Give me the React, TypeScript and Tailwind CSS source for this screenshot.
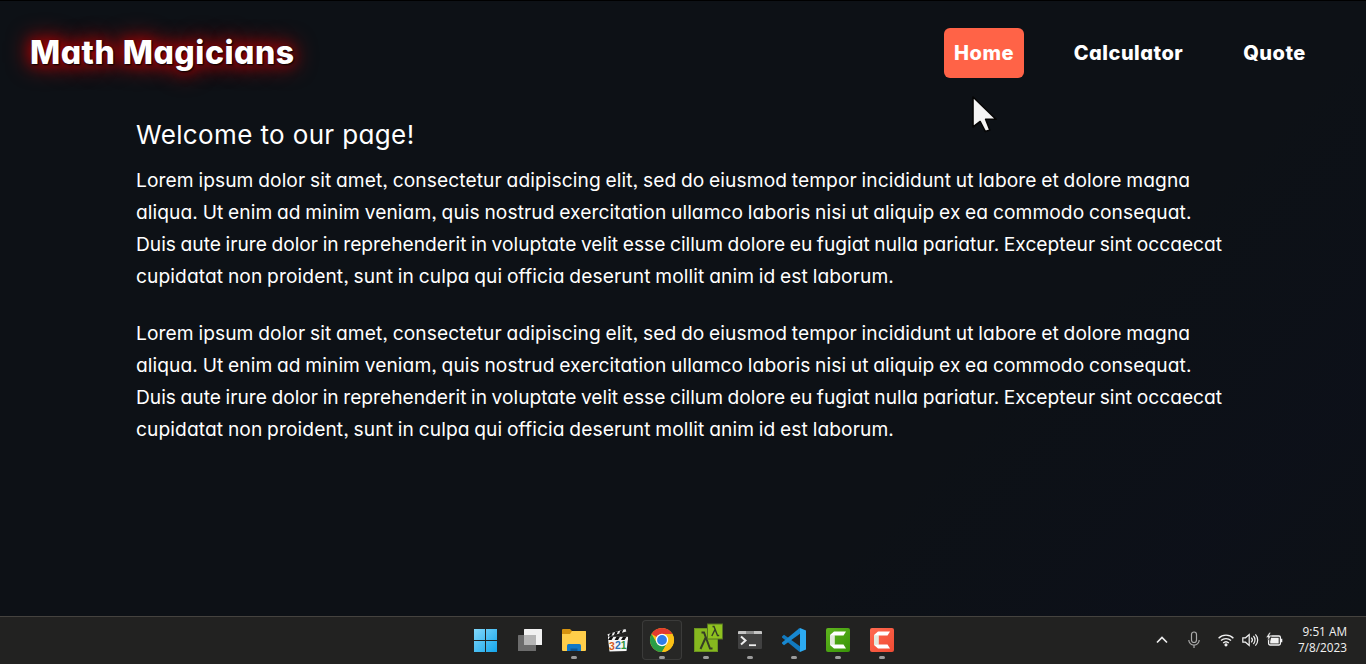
import type { ReactNode } from "react";

type Line = { text: string; tracking: string };

const lines: Line[] = [
  { text: "Lorem ipsum dolor sit amet, consectetur adipiscing elit, sed do eiusmod tempor incididunt ut labore et dolore magna", tracking: "tracking-[0.09px]" },
  { text: "aliqua. Ut enim ad minim veniam, quis nostrud exercitation ullamco laboris nisi ut aliquip ex ea commodo consequat.", tracking: "tracking-[0.08px]" },
  { text: "Duis aute irure dolor in reprehenderit in voluptate velit esse cillum dolore eu fugiat nulla pariatur. Excepteur sint occaecat", tracking: "tracking-[0px]" },
  { text: "cupidatat non proident, sunt in culpa qui officia deserunt mollit anim id est laborum.", tracking: "tracking-[0.1px]" },
];

function Paragraph() {
  return (
    <p className="text-[19.2px] leading-8 [word-spacing:-0.8px]">
      {lines.map((line) => (
        <span key={line.text} className={`block whitespace-nowrap ${line.tracking}`}>
          {line.text}
        </span>
      ))}
    </p>
  );
}

function TaskButton({ children, active, running }: { children: ReactNode; active?: boolean; running?: boolean }) {
  return (
    <div className={`relative h-10 w-10 rounded ${active ? "bg-[#272726] ring-1 ring-inset ring-[#3b3b3a]" : ""}`}>
      <svg viewBox="0 0 40 40" className="block h-10 w-10">
        {children}
      </svg>
      {running && <span className="absolute bottom-[1px] left-[17px] h-[3px] w-[6px] rounded-full bg-[#9b9b9b]" />}
    </div>
  );
}

function CamtasiaGlyph({ id, from, to }: { id: string; from: string; to: string }) {
  return (
    <>
      <defs>
        <linearGradient id={id} x1="0" y1="0" x2="1" y2="1">
          <stop offset="0" stopColor={from} />
          <stop offset="1" stopColor={to} />
        </linearGradient>
      </defs>
      <rect x="8" y="8" width="24" height="24" rx="2" fill={`url(#${id})`} />
      <path d="M12 15L16 11.5H28L25.5 15.5H16.5V24.5H25.5L28 28.5H16L12 25Z" fill="#fff" />
      <path d="M12 15L16.5 15.5V24.5L12 25Z" fill="#e3e9dc" />
    </>
  );
}

function Taskbar() {
  return (
    <footer className="grid h-12 grid-cols-[466px_436px_1fr] border-t border-[#45433f] bg-[#222221] pt-[3px]">
      <div />
      <div className="flex gap-1">
        <TaskButton>
          <defs>
            <linearGradient id="win" x1="0" y1="0" x2="1" y2="1">
              <stop offset="0" stopColor="#82d8fb" />
              <stop offset="1" stopColor="#14a5ea" />
            </linearGradient>
          </defs>
          <path d="M8 9H19V20H8ZM20 9H31V20H20ZM8 21H19V32H8ZM20 21H31V32H20Z" fill="url(#win)" />
        </TaskButton>
        <TaskButton>
          <rect x="14" y="9" width="18" height="16" rx="0.5" fill="#f1f1f1" />
          <rect x="8" y="15" width="18" height="16" rx="0.5" fill="#6c6c6c" />
          <rect x="14" y="15" width="12" height="10" fill="#b5b5b5" />
        </TaskButton>
        <TaskButton running>
          <path d="M8 10Q8 9 9 9H16L18 11H32V18H8Z" fill="#d6930f" />
          <path d="M8 14H16L18 11H31Q32 11 32 12V30Q32 31 31 31H9Q8 31 8 30Z" fill="#ffce4a" />
          <path d="M13 31V25.5Q13 24 14.5 24H25.5Q27 24 27 25.5V31Z" fill="#0f78c8" />
          <path d="M16.5 31V28.5H23.5V31Z" fill="#0b5797" />
        </TaskButton>
        <TaskButton>
          <path d="M10 18.5H30L28.5 31L11.5 31.5Z" fill="#f5f5f5" />
          <path d="M9.5 14.2L27.5 9L28.3 11.6L10.3 16.8Z" fill="#eee" />
          <path d="M12 13.5L14.8 12.7L13.5 15.9L10.7 16.7ZM17.2 12L20 11.2L18.7 14.4L15.9 15.2ZM22.4 10.5L25.2 9.7L23.9 12.9L21.1 13.7Z" fill="#111" />
          <path d="M10 16.8H30V20H10Z" fill="#f5f5f5" />
          <path d="M12 16.8H15.5L13.5 20H10ZM18.5 16.8H22L20 20H16.5ZM25 16.8H28.5L26.5 20H23Z" fill="#111" />
          <g fontFamily="Liberation Sans, sans-serif" fontWeight="700" fontSize="10.5" letterSpacing="0">
            <text x="11" y="29.5" fill="#d75a1c">3</text>
            <text x="17" y="29.3" fill="#2a70b7">2</text>
            <text x="22.8" y="29" fill="#2e963c">1</text>
          </g>
        </TaskButton>
        <TaskButton active running>
          <circle cx="20" cy="20" r="12" fill="#fbc116" />
          <path d="M20 20L9.6 14A12 12 0 0 1 30.4 14Z" fill="#e33b2e" />
          <path d="M9.6 14A12 12 0 0 0 20 32L25.2 23L20 20L14.8 23Z" fill="#2a9d47" />
          <path d="M25.2 23L20 32A12 12 0 0 0 30.4 14H20Z" fill="#fbc116" />
          <circle cx="20" cy="20" r="6.2" fill="#fff" />
          <circle cx="20" cy="20" r="4.9" fill="#2f7de9" />
        </TaskButton>
        <TaskButton running>
          <rect x="8.5" y="8.5" width="23" height="23" fill="#86b81f" stroke="#6c951f" />
          <path d="M15.5 12.5H18L24 28.5H26.5M19.7 17.5L14.5 29" fill="none" stroke="#353d26" strokeWidth="2" />
          <rect x="21.5" y="4" width="15" height="15" fill="#8fc21f" stroke="#567522" />
          <path d="M26.5 6.5H28L31.5 15.5H33.2M29 9.5L25.8 16" fill="none" stroke="#353d26" strokeWidth="1.4" />
        </TaskButton>
        <TaskButton running>
          <rect x="8" y="11" width="24" height="18" rx="1" fill="#414141" />
          <path d="M8 14V12Q8 11 9 11H31Q32 11 32 12V14Z" fill="#c4c4c4" />
          <path d="M16 11H24V14H16Z" fill="#8d8d8d" />
          <path d="M11 16.5L15.5 20.5L11 24.5" fill="none" stroke="#eee" strokeWidth="2" />
          <path d="M19 25.2H26" stroke="#eee" strokeWidth="1.8" />
        </TaskButton>
        <TaskButton running>
          <path d="M8 16.6L10 14.8L26 26.2V32L25 31.5L8 17.6Z" fill="#1279be" />
          <path d="M8 23.4L10 25.2L26 13.8V8L25 8.5L8 22.4Z" fill="#1888d0" />
          <path d="M26 8L32 10.6V29.4L26 32Z" fill="#2cabf3" />
        </TaskButton>
        <TaskButton running>
          <CamtasiaGlyph id="green" from="#5fb51e" to="#389408" />
        </TaskButton>
        <TaskButton running>
          <CamtasiaGlyph id="red" from="#ff6a50" to="#f04b33" />
        </TaskButton>
      </div>
      <div className="flex h-10 items-center justify-end pr-[19px] text-[#f2f2f2]">
        <svg viewBox="0 0 12 16" className="h-4 w-3 fill-none stroke-[#eee] stroke-[1.7]">
          <path d="M1 10.5L6 5.5L11 10.5" />
        </svg>
        <svg viewBox="0 0 14 18" className="ml-[19px] h-[18px] w-3.5 fill-none stroke-[#aaa] stroke-[1.2]">
          <rect x="4.5" y="1" width="5" height="10.5" rx="2.5" />
          <path d="M1.8 9A5.2 5.2 0 0 0 12.2 9M7 14.2V17" />
        </svg>
        <svg viewBox="0 0 16 14" className="ml-[17px] h-3.5 w-4 fill-none stroke-[#f2f2f2] stroke-[1.35]">
          <path d="M0.6 5.2A10.4 10.4 0 0 1 15.4 5.2M3 7.6A7.2 7.2 0 0 1 13 7.6M5.2 10A4.1 4.1 0 0 1 10.8 10" />
          <circle cx="8" cy="11.8" r="0.9" className="fill-white" />
        </svg>
        <svg viewBox="0 0 17 16" className="ml-2 h-4 w-[17px] fill-none stroke-[#f2f2f2] stroke-[1.2]">
          <path d="M0.8 5.8H3.5L7.2 2.5V13.5L3.5 10.2H0.8Z" />
          <path d="M9.3 5.7A3.3 3.3 0 0 1 9.3 10.3M11.4 4A5.8 5.8 0 0 1 11.4 12M13.4 2.3A8.2 8.2 0 0 1 13.4 13.7" />
        </svg>
        <svg viewBox="0 0 17 16" className="ml-[7px] h-4 w-[17px]">
          <rect x="2.6" y="4" width="11.8" height="9" rx="1.4" fill="none" stroke="#f2f2f2" strokeWidth="1.3" />
          <path d="M5 5.8H12.7V11.4H4.2V9.5Z" fill="#f2f2f2" />
          <path d="M15 6.8H16.3V10.2H15Z" fill="#f2f2f2" />
          <path d="M3.3 0.5L0 5.4H2.1L1.5 8.8L5.4 3.8H3.2L4.8 0.5Z" fill="#f2f2f2" stroke="#222221" strokeWidth="0.5" />
        </svg>
        <div className="ml-[13px] w-[51px] pb-0.5 text-right font-['Open_Sans',sans-serif] text-[11.8px] leading-4 whitespace-nowrap">
          <div>9:51 AM</div>
          <div>7/8/2023</div>
        </div>
      </div>
    </footer>
  );
}

export default function App() {
  return (
    <div className="flex h-[664px] w-[1366px] flex-col overflow-hidden bg-[#0d1116] font-['Inter',sans-serif] text-white [font-feature-settings:'cv11','ss03']">
      <div className="relative flex flex-1 flex-col border-t border-black bg-[linear-gradient(135deg,transparent_70%,#0c0f1d60_88%,transparent)]">
        <header className="flex h-[103px] items-center justify-between pr-[50px] pl-[30px]">
          <h1 className="text-[32px] font-extrabold whitespace-nowrap tracking-[0.5px] [text-shadow:1px_1px_2px_#000,0_0_25px_#f00,0_0_14px_#8b0000]">Math Magicians</h1>
          <nav className="flex gap-10 text-[20px] font-extrabold tracking-[0.5px]">
            <a className="flex h-[50px] w-20 items-center justify-center rounded-[6px] bg-[#ff6347]">Home</a>
            <a className="flex h-[50px] w-[129px] items-center justify-center">Calculator</a>
            <a className="flex h-[50px] w-[83px] items-center justify-center">Quote</a>
          </nav>
        </header>
        <main className="flex flex-col pl-[136px]">
          <h2 className="mt-[11px] h-[49px] text-[26px] leading-[39px] whitespace-nowrap tracking-[0.37px]">Welcome to our page!</h2>
          <div className="flex flex-col gap-[25px]">
            <Paragraph />
            <Paragraph />
          </div>
        </main>
        <svg viewBox="0 0 28 42" className="absolute top-[94px] left-[971px] h-[42px] w-7">
          <path d="M2 2V32L9.2 26.5L14.4 36.6L18.8 35L14.6 24.3H25.2Z" fill="#f4f4f4" stroke="#050505" strokeWidth="1.6" strokeLinejoin="round" />
        </svg>
      </div>
      <Taskbar />
    </div>
  );
}
